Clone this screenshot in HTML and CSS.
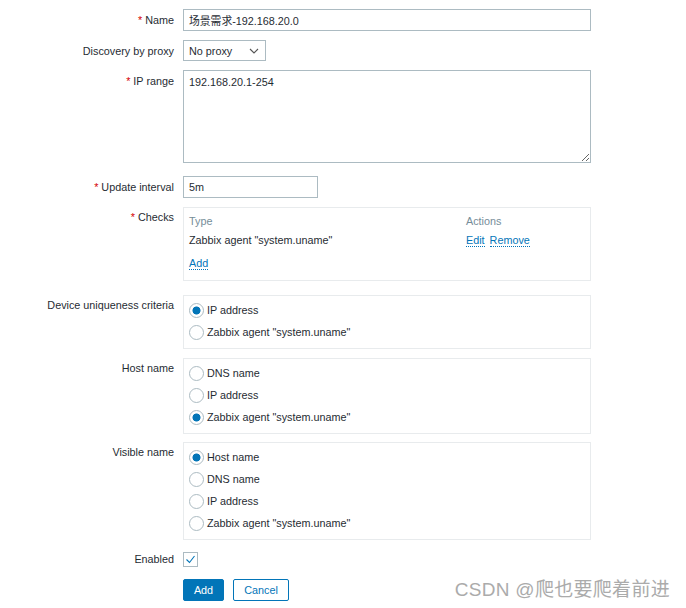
FILE: index.html
```html
<!DOCTYPE html>
<html lang="zh">
<head>
  <meta charset="UTF-8">
  <title>Discovery rule</title>
  <meta name="viewport" content="width=device-width, initial-scale=1.0">
  <link rel="stylesheet" href="styles.css">
</head>

<body>
  <form class="form">
    <div class="row row-name">
      <label class="label"><span class="req">*</span> Name</label>
      <div class="field"><input class="text text-wide" type="text" value="场景需求-192.168.20.0"></div>
    </div>

    <div class="row row-proxy">
      <label class="label">Discovery by proxy</label>
      <div class="field">
        <div class="select">
          <span>No proxy</span>
          <svg class="chevron" width="10" height="6" viewBox="0 0 10 6"><polyline points="1,1 5,5 9,1" fill="none" stroke="#555" stroke-width="1.1"/></svg>
        </div>
      </div>
    </div>

    <div class="row row-range">
      <label class="label"><span class="req">*</span> IP range</label>
      <div class="field"><textarea class="area">192.168.20.1-254</textarea></div>
    </div>

    <div class="row row-delay">
      <label class="label"><span class="req">*</span> Update interval</label>
      <div class="field"><input class="text text-short" type="text" value="5m"></div>
    </div>

    <div class="row row-checks">
      <label class="label label-box"><span class="req">*</span> Checks</label>
      <div class="field">
        <div class="box checks">
          <div class="checks-grid">
            <div class="th">Type</div>
            <div class="th">Actions</div>
            <div class="td">Zabbix agent "system.uname"</div>
            <div class="td"><a class="link" href="#">Edit</a><a class="link" href="#">Remove</a></div>
          </div>
          <a class="link" href="#">Add</a>
        </div>
      </div>
    </div>

    <div class="row row-unique">
      <label class="label label-box">Device uniqueness criteria</label>
      <div class="field">
        <ul class="box radios">
          <li><span class="radio checked"></span>IP address</li>
          <li><span class="radio"></span>Zabbix agent "system.uname"</li>
        </ul>
      </div>
    </div>

    <div class="row row-host">
      <label class="label label-box">Host name</label>
      <div class="field">
        <ul class="box radios">
          <li><span class="radio"></span>DNS name</li>
          <li><span class="radio"></span>IP address</li>
          <li><span class="radio checked"></span>Zabbix agent "system.uname"</li>
        </ul>
      </div>
    </div>

    <div class="row row-visible">
      <label class="label label-box">Visible name</label>
      <div class="field">
        <ul class="box radios">
          <li><span class="radio checked"></span>Host name</li>
          <li><span class="radio"></span>DNS name</li>
          <li><span class="radio"></span>IP address</li>
          <li><span class="radio"></span>Zabbix agent "system.uname"</li>
        </ul>
      </div>
    </div>

    <div class="row row-enabled">
      <label class="label label-check">Enabled</label>
      <div class="field">
        <span class="checkbox">
          <svg width="13" height="13" viewBox="0 0 13 13"><polyline points="2.5,6.5 5.5,9.5 10.5,3" fill="none" stroke="#0275b8" stroke-width="1.1"/></svg>
        </span>
      </div>
    </div>

    <div class="row row-buttons">
      <span></span>
      <div class="field buttons">
        <button class="btn btn-main" type="button">Add</button>
        <button class="btn btn-alt" type="button">Cancel</button>
      </div>
    </div>
  </form>

  <div class="watermark">CSDN @爬也要爬着前进</div>
</body>
</html>
```

FILE: styles.css
```css
body {
  margin: 0;
  background: #ffffff;
  font-family: "Liberation Sans", Arial, "Noto Sans CJK SC", sans-serif;
  font-size: 10.8px;
  color: #1f2c33;
  position: relative;
  height: 608px;
  overflow: hidden;
}

.form {
  padding-top: 9px;
}

.row {
  display: grid;
  grid-template-columns: 174px 408px;
  column-gap: 9px;
  margin-bottom: 9px;
}

.row-range { margin-bottom: 13px; }
.row-checks { margin-bottom: 14px; }
.row-host { margin-bottom: 8px; }
.row-visible { margin-bottom: 12px; }
.row-enabled { margin-bottom: 12px; }

.label {
  text-align: right;
  line-height: 14px;
  padding-top: 4px;
  white-space: nowrap;
}

.label-box { padding-top: 3px; }
.label-check { padding-top: 0; }

.req {
  color: #d40000;
}

.text {
  box-sizing: border-box;
  height: 22px;
  border: 1px solid #acbbc2;
  padding: 0 5px;
  font: inherit;
  color: #1f2c33;
  outline: none;
  display: block;
}

.text-wide { width: 408px; }
.text-short { width: 135px; }

.select {
  box-sizing: border-box;
  width: 83px;
  height: 21px;
  border: 1px solid #acbbc2;
  padding: 0 6px 0 5px;
  display: flex;
  align-items: center;
  justify-content: space-between;
}

.area {
  box-sizing: border-box;
  display: block;
  width: 408px;
  height: 93px;
  border: 1px solid #acbbc2;
  padding: 4px 5px;
  font: inherit;
  line-height: 14px;
  color: #1f2c33;
  resize: vertical;
  outline: none;
  margin: 0;
}

.box {
  box-sizing: border-box;
  width: 408px;
  border: 1px solid #e8ebed;
  margin: 0;
}

.checks {
  height: 74px;
  padding: 6px 5px;
}

.checks-grid {
  display: grid;
  grid-template-columns: 277px auto;
  row-gap: 5px;
  margin-bottom: 9px;
  line-height: 14px;
}

.th {
  color: #768d99;
}

.link {
  color: #0275b8;
  text-decoration: none;
  border-bottom: 1px dotted #0275b8;
  margin-right: 5px;
  line-height: 14px;
}

.radios {
  list-style: none;
  padding: 3px 5px 5px;
}

.radios li {
  height: 22px;
  display: flex;
  align-items: center;
  gap: 3px;
  line-height: 14px;
}

.radio {
  box-sizing: border-box;
  width: 15px;
  height: 15px;
  border: 1px solid #acbbc2;
  border-radius: 50%;
  background: #ffffff;
}

.radio.checked {
  background: radial-gradient(circle, #0275b8 0, #0275b8 3.6px, #ffffff 4.4px);
}

.checkbox {
  box-sizing: border-box;
  display: flex;
  align-items: center;
  justify-content: center;
  width: 15px;
  height: 15px;
  border: 1px solid #acbbc2;
}

.buttons {
  display: flex;
  gap: 9px;
}

.btn {
  box-sizing: border-box;
  height: 22px;
  border: 1px solid #0275b8;
  border-radius: 2px;
  font: inherit;
  padding: 0;
  cursor: pointer;
}

.btn-main {
  width: 41px;
  background: #0275b8;
  color: #ffffff;
}

.btn-alt {
  width: 56px;
  background: #ffffff;
  color: #0275b8;
}

.watermark {
  position: absolute;
  right: 16px;
  bottom: 7px;
  font-family: "Liberation Sans", Arial, "Noto Sans CJK SC", sans-serif;
  font-size: 19px;
  color: #ababab;
  letter-spacing: 0.3px;
}
```
